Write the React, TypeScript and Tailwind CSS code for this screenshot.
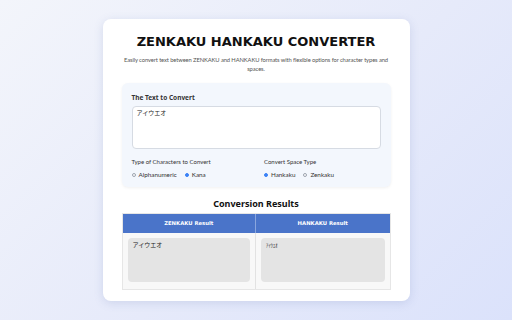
import React from 'react';

const wide = { fontFamily: '"DejaVu Sans", "Noto Sans CJK JP", sans-serif' };
const body = { fontFamily: 'Lato, "Noto Sans CJK JP", sans-serif' };

function Radio({ label, checked }: { label: string; checked?: boolean }) {
  return (
    <label className="flex items-center gap-[3px]">
      <span
        className={
          checked
            ? 'w-[4px] h-[4px] rounded-full bg-[#3b82f6] border border-[#3b82f6]'
            : 'w-[4px] h-[4px] rounded-full bg-white border border-[#9ca3af]'
        }
      />
      <span className="text-[6.3px] text-[#333]" style={body}>
        {label}
      </span>
    </label>
  );
}

export default function App() {
  return (
    <div
      className="w-[512px] h-[320px] flex justify-center pt-[19px] bg-[linear-gradient(135deg,#f3f5fb_0%,#e6eafa_55%,#dbe2fb_100%)]"
      style={{ fontFamily: '"Noto Sans", "Noto Sans CJK JP", sans-serif' }}
    >
      <div className="w-[307px] h-[282px] bg-white rounded-[8px] shadow-[0_2px_10px_rgba(90,110,170,0.18)] px-[19px] pt-[16px] flex flex-col">
        <h1 className="text-center text-[13px] font-bold text-[#111] leading-[14px]" style={wide}>
          ZENKAKU HANKAKU CONVERTER
        </h1>
        <p
          className="mt-[6px] -mx-[2px] text-center text-[5.8px] tracking-[-0.1px] leading-[9px] text-[#555]"
          style={body}
        >
          Easily convert text between ZENKAKU and HANKAKU formats with flexible options for character types and
          spaces.
        </p>

        <div className="mt-[10px] bg-[#f3f7fd] rounded-[6px] shadow-[0_1px_3px_rgba(0,0,0,0.06)] px-[10px] pt-[10px] pb-[8px]">
          <div className="text-[6.5px] font-bold text-[#333] leading-[9px]">The Text to Convert</div>
          <div className="mt-[4px] h-[43px] bg-white border border-[#d6dbe3] rounded-[4px] px-[4px] pt-[2px] text-[6px] text-[#222]">
            アイウエオ
          </div>
          <div className="mt-[9px] grid grid-cols-2 gap-[16px]">
            <div>
              <div className="text-[6px] text-[#333] leading-[8px]" style={body}>
                Type of Characters to Convert
              </div>
              <div className="mt-[4px] flex gap-[8px]">
                <Radio label="Alphanumeric" />
                <Radio label="Kana" checked />
              </div>
            </div>
            <div>
              <div className="text-[6px] text-[#333] leading-[8px]" style={body}>
                Convert Space Type
              </div>
              <div className="mt-[4px] flex gap-[8px]">
                <Radio label="Hankaku" checked />
                <Radio label="Zenkaku" />
              </div>
            </div>
          </div>
        </div>

        <h2 className="mt-[11px] text-center text-[9px] font-bold text-[#111] leading-[12px]">
          Conversion Results
        </h2>

        <div className="mt-[3px] border border-[#e6e6e6]">
          <div className="grid grid-cols-2 bg-[#4a74c9] h-[19px] text-white text-[5.3px] font-bold" style={wide}>
            <div className="flex items-center justify-center border-r border-[#8aa6de]">ZENKAKU Result</div>
            <div className="flex items-center justify-center">HANKAKU Result</div>
          </div>
          <div className="grid grid-cols-2 bg-[#f8f8f8] h-[56px]">
            <div className="border-r border-[#e2e2e2] p-[5px]">
              <div className="h-[44px] bg-[#e4e4e4] rounded-[4px] px-[5px] pt-[3px] text-[6px] text-[#222]">
                アイウエオ
              </div>
            </div>
            <div className="p-[5px]">
              <div className="h-[44px] bg-[#e4e4e4] rounded-[4px] px-[5px] pt-[4px] text-[4.6px] text-[#222]">
                ｱｲｳｴｵ
              </div>
            </div>
          </div>
        </div>
      </div>
    </div>
  );
}
